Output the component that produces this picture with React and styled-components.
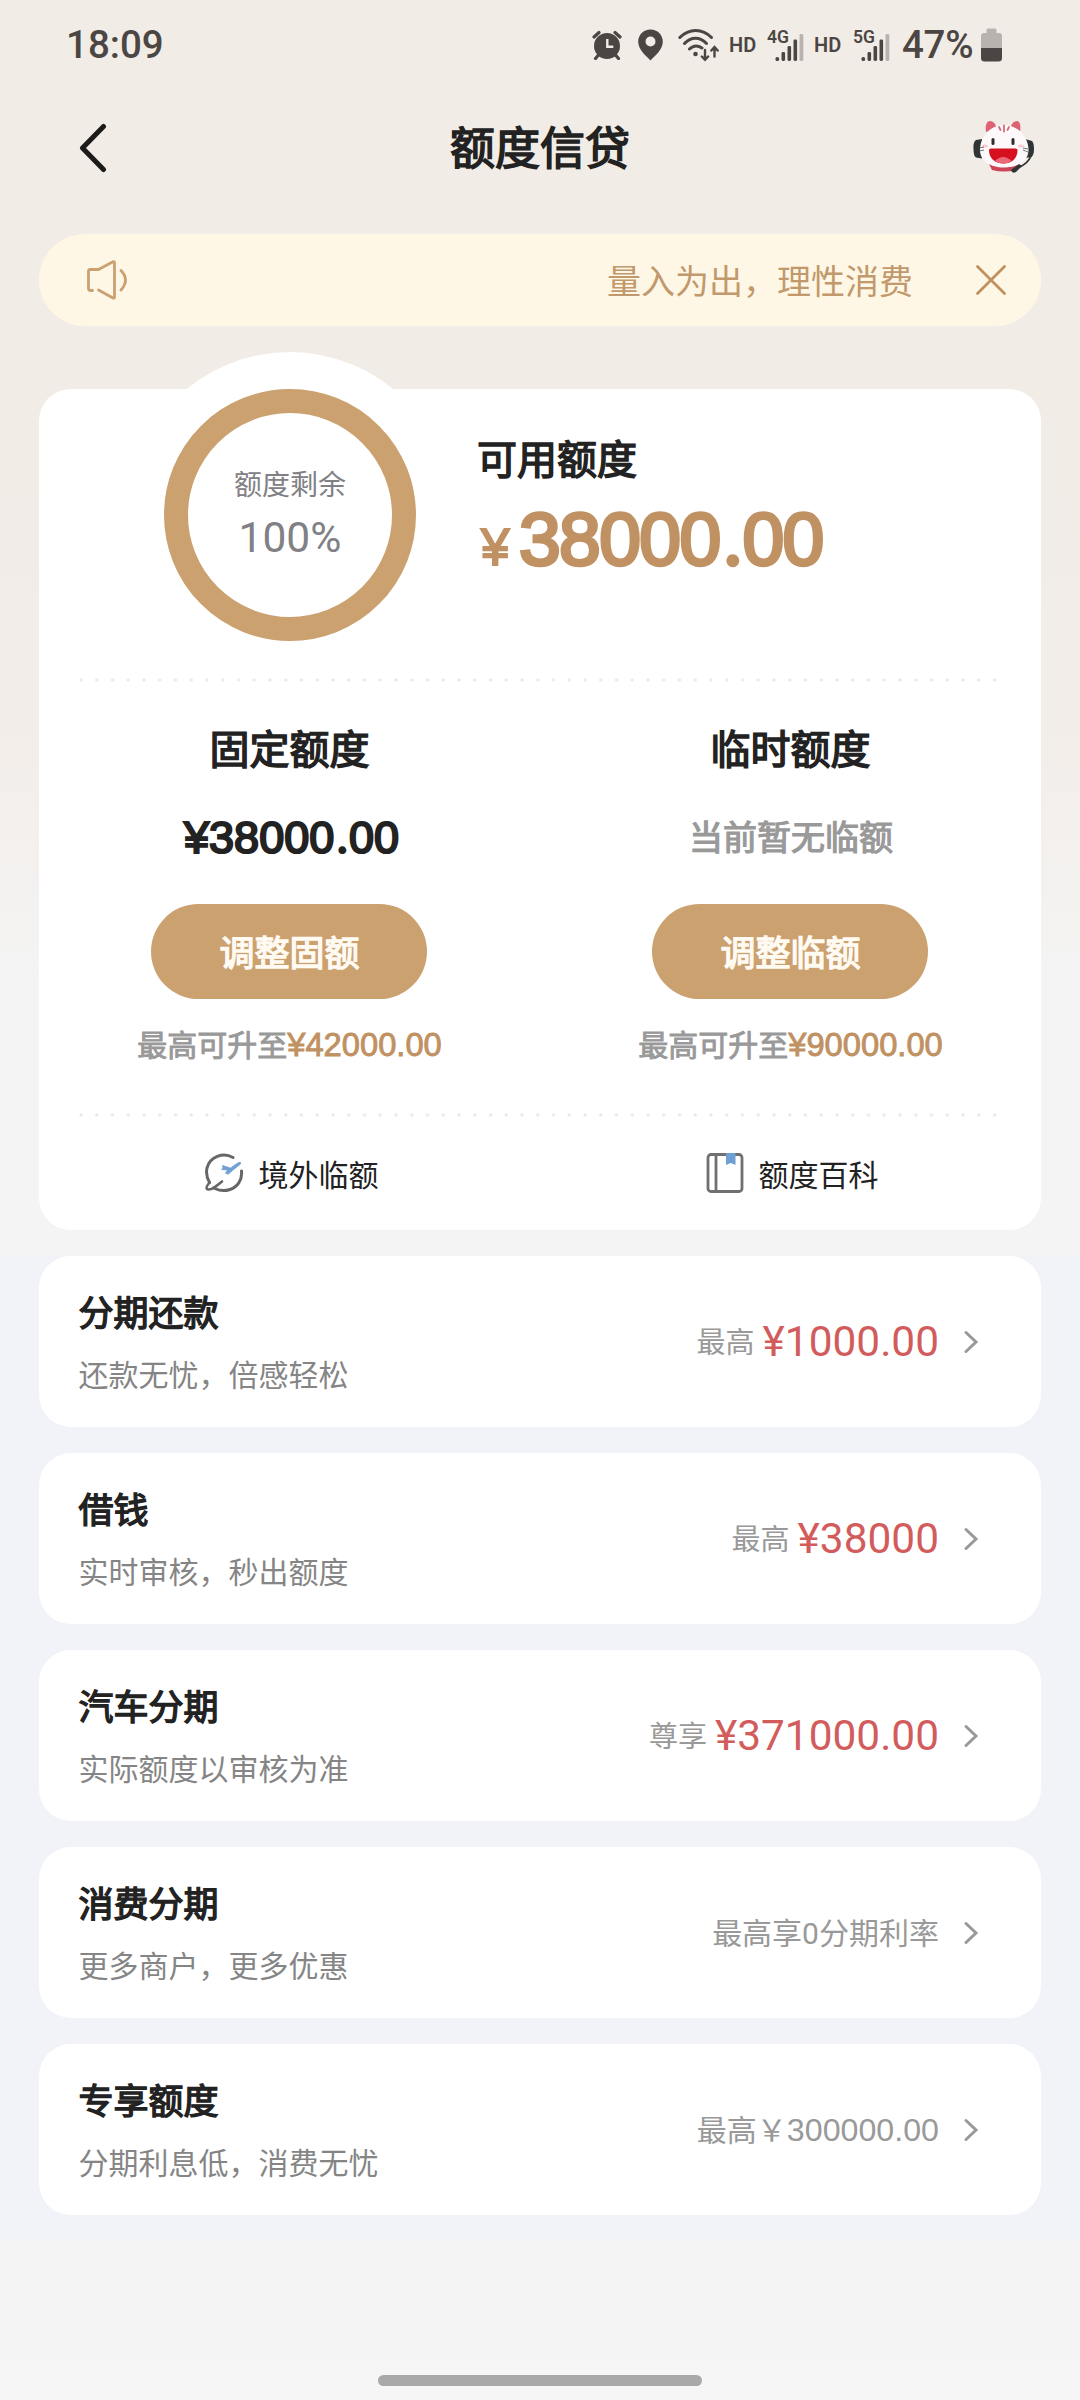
import styled, { createGlobalStyle } from "styled-components";

const GlobalStyle = createGlobalStyle`
    * { box-sizing: border-box; }
    body {
        margin: 0;
        font-family: Roboto, "Noto Sans CJK SC", sans-serif;
        color: #222;
    }
`;

const Page = styled.div`
    width: 1080px;
    height: 2400px;
    display: flex;
    flex-direction: column;
    overflow: hidden;
    background: linear-gradient(#f1ece6 0, #f1ece6 480px, #f3eeea 760px, #f4f4f4 980px);
`;

const StatusBar = styled.div`
    height: 88px;
    padding: 1px 78px 0 66px;
    display: flex;
    align-items: center;
    justify-content: space-between;
    color: #4b4643;
    font-size: 38.5px;
    font-weight: 500;
`;

const StatusIcons = styled.div`
    display: flex;
    align-items: center;
`;

const StatusIcon = styled.svg`
    flex: none;
    margin-right: ${(p) => p.$gap || 0}px;
`;

const Hd = styled.span`
    width: 27px;
    margin-right: ${(p) => p.$gap}px;
    font-size: 20px;
    font-weight: 600;
`;

const Percent = styled.span`
    width: 79px;
    letter-spacing: -0.3px;
`;

const NavBar = styled.div`
    height: 146px;
    padding: 0 45px 22px 78px;
    display: grid;
    grid-template-columns: 180px 1fr 213px;
    align-items: center;
`;

const BackIcon = styled.svg`
    margin-top: -4px;
`;

const PageTitle = styled.h1`
    margin: 0;
    text-align: center;
    font-size: 45px;
    line-height: 60px;
    font-weight: 400;
    -webkit-text-stroke: 1.6px;
`;

const Mascot = styled.svg`
    justify-self: end;
    margin-top: -6px;
`;

const Notice = styled.div`
    height: 92px;
    margin: 0 39px;
    padding: 0 33px 0 46px;
    display: flex;
    align-items: center;
    border-radius: 46px;
    background: #fff7e6;
    color: #c1996c;
    font-size: 34px;
`;

const NoticeText = styled.span`
    flex: 1;
    text-align: right;
    margin: -2px 61px 0 0;
`;

const LimitCard = styled.section`
    height: 841px;
    margin: 63px 39px 26px;
    border-radius: 32px;
    background: #fff;
`;

const Overview = styled.div`
    height: 289px;
    padding-left: 88px;
    display: flex;
    align-items: flex-start;
`;

const RingHolder = styled.div`
    width: 326px;
    height: 326px;
    margin-top: -37px;
    display: flex;
    align-items: center;
    justify-content: center;
    border-radius: 50%;
    background: #fff;
`;

const Ring = styled.div`
    width: 252px;
    height: 252px;
    display: flex;
    flex-direction: column;
    align-items: center;
    justify-content: center;
    border: 24px solid #cba170;
    border-radius: 50%;
    color: #808085;
`;

const RingLabel = styled.div`
    font-size: 28px;
    line-height: 40px;
`;

const RingValue = styled.div`
    margin-top: 6px;
    font-size: 42.5px;
    line-height: 52px;
`;

const Available = styled.div`
    padding: 42px 0 0 24px;
`;

const Heading = styled.h2`
    margin: 0;
    font-size: 40px;
    line-height: 60px;
    font-weight: 400;
    -webkit-text-stroke: 1.5px;
`;

const BigAmount = styled.div`
    display: flex;
    align-items: baseline;
    height: 90px;
    color: #c09162;
    font-family: "Liberation Sans", sans-serif;
    font-size: 75px;
    line-height: 90px;
    letter-spacing: -1.6px;
    -webkit-text-stroke: 3.4px;
`;

const Yen = styled.span`
    width: 42px;
    padding-left: 4px;
    font-size: 51px;
    -webkit-text-stroke-width: 2px;
`;

const Point = styled.span`
    margin: 0 0.03em 0 0.06em;
    font-family: Lato, sans-serif;
`;

const Dots = styled.div`
    height: 4px;
    margin: 0 39px 0 40px;
    background: radial-gradient(circle at 2px 2px, #e9e9e9 1.2px, transparent 2px) 0 0 / 15.75px 4px repeat-x;
`;

const Columns = styled.div`
    display: grid;
    grid-template-columns: 1fr 1fr;
    height: ${(p) => p.$height}px;
`;

const Limit = styled.div`
    display: flex;
    flex-direction: column;
    align-items: center;
    padding-top: 39px;
`;

const LimitValue = styled.div`
    height: 60px;
    margin: ${(p) => (p.$muted ? "27px 0 36px 1px" : "25px 0 38px 4px")};
    font-family: ${(p) => (p.$muted ? "inherit" : '"Liberation Sans", sans-serif')};
    font-size: ${(p) => (p.$muted ? 34 : 45)}px;
    line-height: 60px;
    -webkit-text-stroke: ${(p) => (p.$muted ? 1.2 : 2.2)}px;
    color: ${(p) => (p.$muted ? "#999" : "#222")};
`;

const Adjust = styled.button`
    width: 276px;
    height: 95px;
    margin-right: 1px;
    padding: 0 0 2px 1px;
    border: 0;
    border-radius: 48px;
    background: #cba170;
    color: #fffaf2;
    font: inherit;
    font-size: 35px;
    -webkit-text-stroke: 1.4px;
`;

const Raise = styled.div`
    height: 50px;
    margin-top: 21px;
    display: flex;
    align-items: baseline;
    color: #999;
    font-size: 30px;
    line-height: 50px;
    -webkit-text-stroke: 0.9px;

    b {
        color: #c09162;
        font-family: "Liberation Sans", sans-serif;
        font-size: 32.7px;
        font-weight: 400;
    }
`;

const Shortcut = styled.div`
    display: flex;
    align-items: center;
    justify-content: center;
    gap: 15px;
    padding: 0 0 2px 3px;
    font-size: 30px;
`;

const Services = styled.div`
    height: 985px;
    padding: 0 39px;
    display: flex;
    flex-direction: column;
    gap: 25.6px;
    background: #f2f3f8;
`;

const Service = styled.div`
    height: 171.4px;
    flex: none;
    padding: 0 61px 0 39.5px;
    display: flex;
    align-items: center;
    border-radius: 32px;
    background: #fff;
`;

const ServiceText = styled.div`
    flex: 1;
    padding-top: 5px;
`;

const ServiceName = styled.div`
    font-size: 35px;
    line-height: 50px;
    -webkit-text-stroke: 1.4px;
`;

const ServiceHint = styled.div`
    margin-top: 14px;
    font-size: 30px;
    line-height: 44px;
    color: #858585;
`;

const Offer = styled.div`
    display: flex;
    align-items: ${(p) => (p.$amount ? "center" : "baseline")};
    margin: -3px 23px 0 0;
    color: #999;
    font-size: ${(p) => (p.$amount ? 29 : 30)}px;

    b {
        margin: 3px 0 0 8px;
        color: #d25c5c;
        font-size: 42.4px;
        line-height: 56px;
        font-weight: 400;
    }

    i {
        font: 32.2px "Liberation Sans", sans-serif;
    }
`;

const Footer = styled.div`
    height: 41px;
    margin-top: auto;
    padding-top: 16px;
    display: flex;
    justify-content: center;
    background: #f6f6f6;
`;

const HomeBar = styled.div`
    width: 324px;
    height: 11px;
    border-radius: 6px;
    background: #a9a9a9;
`;

const services = [
    { name: "分期还款", hint: "还款无忧，倍感轻松", label: "最高", amount: "¥1000.00" },
    { name: "借钱", hint: "实时审核，秒出额度", label: "最高", amount: "¥38000" },
    { name: "汽车分期", hint: "实际额度以审核为准", label: "尊享", amount: "¥371000.00" },
    { name: "消费分期", hint: "更多商户，更多优惠", label: "最高享0分期利率" },
    { name: "专享额度", hint: "分期利息低，消费无忧", label: "最高￥", plain: "300000.00" },
];

const Signal = ({ type, gap }) => (
    <StatusIcon width="38" height="34" viewBox="0 0 38 34" $gap={gap}>
        <text x="0" y="15" fontSize="17.5" fontWeight="600" fill="#4b4643">{type}</text>
        <g fill="#4b4643">
            <rect x="8.5" y="29" width="3.6" height="4" rx="1.6" />
            <rect x="14.5" y="24" width="3.6" height="9" rx="1.4" />
            <rect x="20.5" y="18" width="3.6" height="15" rx="1.4" />
            <rect x="26.5" y="11.5" width="3.6" height="21.5" rx="1.4" />
        </g>
        <rect x="32.5" y="6" width="3.8" height="27" rx="1.4" fill="#b8b3ae" />
    </StatusIcon>
);

const Amount = ({ whole, cents }) => (
    <span>{whole}<Point>.</Point>{cents}</span>
);

const App = () => {

    return (
        <Page>
            <GlobalStyle />
            <StatusBar>
                <span>18:09</span>
                <StatusIcons>
                    <StatusIcon width="30" height="30" viewBox="0 0 30 30" $gap={16}>
                        <circle cx="15" cy="16" r="13" fill="#4b4643" />
                        <path d="M2 7 7 2.5M28 7 23 2.5M6.5 25 3.5 28.5M23.5 25 26.5 28.5" stroke="#4b4643" strokeWidth="3.2" strokeLinecap="round" />
                        <path d="M15.3 9v7.8h6" fill="none" stroke="#f1ece6" strokeWidth="2.4" />
                    </StatusIcon>
                    <StatusIcon width="25" height="32" viewBox="0 0 25 32" $gap={15}>
                        <path fillRule="evenodd" fill="#4b4643" d="M12.5 0.5C5.5 0.5 0.2 6 0.2 12.5c0 8 7.5 14 12.3 19 4.8-5 12.3-11 12.3-19C24.8 6 19.5 0.5 12.5 0.5zM12.5 7.5a5 5 0 1 1 0 10 5 5 0 0 1 0-10z" />
                    </StatusIcon>
                    <StatusIcon width="42" height="34" viewBox="0 0 42 34" $gap={9}>
                        <g fill="none" stroke="#4b4643" strokeWidth="3" strokeLinecap="round">
                            <path d="M1.8 9.5C11 0 24.5 0 33.5 9.5M6.5 15.5c6.5-7 15.5-7 22 0M11.5 21c4-4 8-4 12.5-1" />
                            <path strokeWidth="2.4" d="M27 22v9M23.8 28.5 27 31.7l3.2-3.2M36.5 28.5v-9M33.3 22.5 36.5 19l3.2 3.5" />
                        </g>
                        <circle cx="17.5" cy="26" r="2.3" fill="#4b4643" />
                    </StatusIcon>
                    <Hd $gap={11}>HD</Hd>
                    <Signal type="4G" gap={9} />
                    <Hd $gap={12}>HD</Hd>
                    <Signal type="5G" gap={11} />
                    <Percent>47%</Percent>
                    <StatusIcon width="21" height="34" viewBox="0 0 21 34">
                        <path fill="#b8b3ae" d="M5.5 5V2q0-1.500 1.500-1.500h7q1.500 0 1.500 1.500V5H18q3 0 3 3v12H0V8q0-3 3-3z" />
                        <path fill="#4b4643" d="M0 20h21v10q0 3.500-3.500 3.500h-14Q0 33.500 0 30z" />
                    </StatusIcon>
                </StatusIcons>
            </StatusBar>

            <NavBar>
                <BackIcon width="30" height="50" viewBox="0 0 30 50">
                    <path d="M25.5 3.5 4.5 25l21 21.5" fill="none" stroke="#1d1b19" strokeWidth="5" strokeLinecap="round" strokeLinejoin="round" />
                </BackIcon>
                <PageTitle>额度信贷</PageTitle>
                <Mascot width="62" height="56" viewBox="0 0 62 56">
                    <path d="M13 13C12 6 14 2 17 2c4 0 6 4 7 8zM47 13c1-7 0-11-3-11-4 0-6 4-7 8z" fill="#df6174" />
                    <path d="M9 20 3 21Q0 23 0.5 30q0 7 2.5 8.5l6 1zM52 20l7 2q2 2 2 8 0 6-2.5 8L52 39z" fill="#2f3435" />
                    <path d="M16 45q15 6 30 0l-3 6q-12 3-24 0z" fill="#cf4358" />
                    <path d="M31 6c14 0 24.5 12 24.5 25 0 11-11 17.5-24.5 17.5S7 42 7 31C7 18 17 6 31 6z" fill="#fdf8f9" />
                    <path d="M31 6.5v6M26 8l1.500 3M36 8l-1.500 3" stroke="#d56b7d" strokeWidth="1.8" strokeLinecap="round" />
                    <rect x="18.5" y="19" width="3" height="7" rx="1.5" fill="#332c2e" />
                    <rect x="38.5" y="19" width="3" height="7" rx="1.5" fill="#332c2e" />
                    <ellipse cx="12" cy="27" rx="3" ry="1.5" fill="#f7ccd4" />
                    <ellipse cx="48" cy="27" rx="3" ry="1.5" fill="#f7ccd4" />
                    <path d="M16 31q0-1.500 2-1.500h24.500q2 0 2 1.500c0 8-5 13.500-14 13.500S16 39 16 31z" fill="#d6101f" />
                    <path d="M22 42q8-8 16.500 0-8 5-16.500 0z" fill="#e9697a" />
                    <path d="M6 29l5-1M6 32l5-1M50 29l5 1M50 31l5 2" stroke="#555" strokeWidth="0.8" />
                    <path d="M58 37q-3 7-11 11" fill="none" stroke="#2f3435" strokeWidth="1.8" />
                    <path d="M38 51l8-6 3 2-6 6q-4 2-5-2z" fill="#2f3435" />
                </Mascot>
            </NavBar>

            <Notice>
                <svg width="44" height="42" viewBox="0 0 44 42" fill="none" stroke="#c9a172" strokeWidth="2.8" strokeLinecap="round" strokeLinejoin="round">
                    <path d="M7.5 31.5H5.5q-2 0-2-2V12.5q0-2 2-2h8L28 2.7q1.500-0.500 1.500 1V38q0 1.500-1.500 1L13.500 31" />
                    <path d="M36 11.5q9 9.500 0 19.500" />
                </svg>
                <NoticeText>量入为出，理性消费</NoticeText>
                <svg width="34" height="34" viewBox="0 0 34 34">
                    <path d="M3.5 3.5 30.5 30.5M30.5 3.5 3.5 30.5" stroke="#c0915f" strokeWidth="2.8" strokeLinecap="round" />
                </svg>
            </Notice>

            <LimitCard>
                <Overview>
                    <RingHolder>
                        <Ring>
                            <RingLabel>额度剩余</RingLabel>
                            <RingValue>100%</RingValue>
                        </Ring>
                    </RingHolder>
                    <Available>
                        <Heading>可用额度</Heading>
                        <BigAmount><Yen>¥</Yen><Amount whole="38000" cents="00" /></BigAmount>
                    </Available>
                </Overview>
                <Dots />
                <Columns $height={431}>
                    <Limit>
                        <Heading>固定额度</Heading>
                        <LimitValue><Amount whole="¥38000" cents="00" /></LimitValue>
                        <Adjust>调整固额</Adjust>
                        <Raise>最高可升至<b>¥42000.00</b></Raise>
                    </Limit>
                    <Limit>
                        <Heading>临时额度</Heading>
                        <LimitValue $muted>当前暂无临额</LimitValue>
                        <Adjust>调整临额</Adjust>
                        <Raise>最高可升至<b>¥90000.00</b></Raise>
                    </Limit>
                </Columns>
                <Dots />
                <Columns $height={113}>
                    <Shortcut>
                        <svg width="40" height="40" viewBox="0 0 40 40" fill="none">
                            <path d="M29 4.5C19-1 6 3.5 3 15c-1.500 6.500 0 10 2.500 14.500M37.500 18c1 9-4 16-11.500 18.500-6 2-11 1-15-1" stroke="#666" strokeWidth="3" strokeLinecap="round" />
                            <path d="M5.5 29.5q-4 5-2.500 6.500t8-1.500M18 28.500q-6 5-9 6.500" stroke="#666" strokeWidth="2.6" strokeLinecap="round" />
                            <path d="M18.5 12.5l8 2.500 8-5.500q3-1 2 1.500l-7.500 6-4.500 4-3-0.500 2-3.500-6-0.500 1.500-1.500z" fill="#6fa0d4" stroke="#6fa0d4" strokeWidth="0.8" />
                        </svg>
                        境外临额
                    </Shortcut>
                    <Shortcut>
                        <svg width="38" height="40" viewBox="0 0 38 40" fill="none">
                            <rect x="2" y="1.5" width="34" height="37" rx="3" stroke="#707070" strokeWidth="2.8" />
                            <path d="M10 2v36" stroke="#707070" strokeWidth="2.8" />
                            <path d="M20 0h9.500v12l-4.700-2L20 12z" fill="#6fa0d4" />
                        </svg>
                        额度百科
                    </Shortcut>
                </Columns>
            </LimitCard>

            <Services>
                {services.map((item) => (
                    <Service key={item.name}>
                        <ServiceText>
                            <ServiceName>{item.name}</ServiceName>
                            <ServiceHint>{item.hint}</ServiceHint>
                        </ServiceText>
                        <Offer $amount={item.amount}>
                            {item.label}
                            {item.amount && <b>{item.amount}</b>}
                            {item.plain && <i>{item.plain}</i>}
                        </Offer>
                        <svg width="18" height="28" viewBox="0 0 18 28">
                            <path d="M4 4.5 14 14 4 23.5" fill="none" stroke="#999" strokeWidth="3" strokeLinecap="round" />
                        </svg>
                    </Service>
                ))}
            </Services>

            <Footer>
                <HomeBar />
            </Footer>
        </Page>
    )

}

export default App;
